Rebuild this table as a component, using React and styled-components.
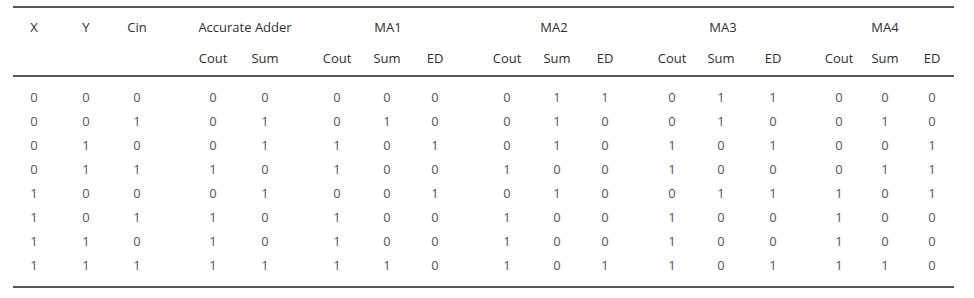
import React from 'react';
import styled, { createGlobalStyle } from 'styled-components';

const GlobalStyle = createGlobalStyle`
  body {
    margin: 0;
    background: #ffffff;
    font-family: "Open Sans", "DejaVu Sans", sans-serif;
  }
`;

// distance between the centres of neighbouring columns
const TRACKS = '52px 51px 76px 52px 72px 50px 48px 72px 50px 48px 67px 49px 52px 66px 46px 47px 20px';

const Page = styled.div`
  width: 941px;
  padding: 6px 0 0 13px;
`;

const Section = styled.div`
  display: grid;
  grid-template-columns: ${TRACKS};
  grid-auto-rows: ${p => p.$rowHeight}px;
  align-items: center;
  padding: ${p => p.$pad};
  padding-left: 21px;
  border-top: 2px solid #555555;
  border-bottom: ${p => (p.$closed ? '2px solid #555555' : 'none')};
`;

// each cell sits on the left edge of its track, its text centred on that line
const Cell = styled.div`
  grid-column: ${p => p.$col};
  grid-row: ${p => p.$row || 'auto'};
  width: 0;
  margin-left: ${p => p.$shift || 0}px;
  display: flex;
  justify-content: center;
  white-space: nowrap;
  font-size: 13px;
  color: ${p => (p.$head ? '#2e2e2e' : p.$mark ? '#7a5050' : '#555555')};
`;

const groups = [
  { label: 'Accurate Adder', col: 4, shift: 32 },
  { label: 'MA1', col: 7, shift: 1 },
  { label: 'MA2', col: 10, shift: -3 },
  { label: 'MA3', col: 13, shift: 2 },
  { label: 'MA4', col: 16, shift: 0 },
];

const subHeads = [
  'Cout', 'Sum',
  'Cout', 'Sum', 'ED',
  'Cout', 'Sum', 'ED',
  'Cout', 'Sum', 'ED',
  'Cout', 'Sum', 'ED',
];

const rows = [
  '000 00 000 011 011 000',
  '001 01 010 010 010 010',
  '010 01 101 010 101 001',
  '011 10 100 100 100 011',
  '100 01 001 010 011 101',
  '101 10 100 100 100 100',
  '110 10 100 100 100 100',
  '111 11 110 101 101 110',
];

const marked = (r, c) => r === 0 && (c === 9 || c === 10);

export default function App() {
  return (
    <Page>
      <GlobalStyle />
      <Section $rowHeight={31} $pad="3px 0 2px">
        <Cell $head $col={1} $row={1}>X</Cell>
        <Cell $head $col={2} $row={1}>Y</Cell>
        <Cell $head $col={3} $row={1}>Cin</Cell>
        {groups.map(g => (
          <Cell key={g.label} $head $col={g.col} $row={1} $shift={g.shift}>{g.label}</Cell>
        ))}
        {subHeads.map((h, i) => (
          <Cell key={i} $head $col={i + 4} $row={2}>{h}</Cell>
        ))}
      </Section>
      <Section $rowHeight={24} $pad="8px 0 9px" $closed>
        {rows.map((r, ri) =>
          r.replace(/ /g, '').split('').map((d, ci) => (
            <Cell key={`${ri}-${ci}`} $col={ci + 1} $mark={marked(ri, ci)}>{d}</Cell>
          ))
        )}
      </Section>
    </Page>
  );
}
